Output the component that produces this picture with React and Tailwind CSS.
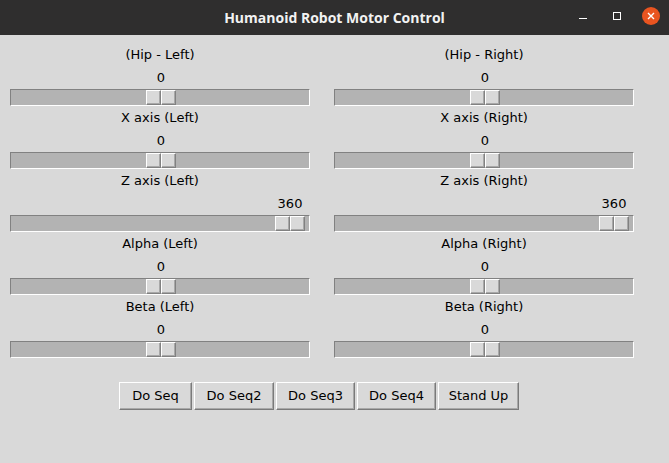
import React from "react";

const rows = [
  { l: "(Hip - Left)", r: "(Hip - Right)", v: "0", pos: 135 },
  { l: "X axis (Left)", r: "X axis (Right)", v: "0", pos: 135 },
  { l: "Z axis (Left)", r: "Z axis (Right)", v: "360", pos: 264 },
  { l: "Alpha (Left)", r: "Alpha (Right)", v: "0", pos: 135 },
  { l: "Beta (Left)", r: "Beta (Right)", v: "0", pos: 135 },
];

function Scale({ label, value, pos }) {
  return (
    <div className="w-[300px] flex flex-col">
      <div className="h-[22px] leading-[22px] text-center pt-[1px]">{label}</div>
      <div className="h-[24px] relative">
        <span
          className="absolute top-[5px] leading-[16px] -translate-x-1/2"
          style={{ left: pos + 16 }}
        >
          {value}
        </span>
      </div>
      <div className="h-[17px] w-[300px] relative bg-[#b3b3b3] border border-t-[#818181] border-l-[#818181] border-b-white border-r-white">
        <div
          className="absolute top-0 h-[15px] w-[30px] flex"
          style={{ left: pos }}
        >
          <div className="w-[15px] h-[15px] bg-[#d9d9d9] border border-t-white border-l-white border-b-[#818181] border-r-[#818181] shadow-[inset_-1px_-1px_0_#a8a8a8]" />
          <div className="w-[15px] h-[15px] bg-[#d9d9d9] border border-t-white border-l-white border-b-[#818181] border-r-[#818181] shadow-[inset_-1px_-1px_0_#a8a8a8]" />
        </div>
      </div>
    </div>
  );
}

function Btn({ children, w }) {
  return (
    <div
      className={`h-[28px] ${w} flex items-center justify-center bg-[#d9d9d9] border border-t-white border-l-white border-b-[#7a7a7a] border-r-[#7a7a7a] shadow-[inset_-1px_-1px_0_#a8a8a8]`}
    >
      {children}
    </div>
  );
}

export default function App() {
  return (
    <div
      className="w-[669px] h-[463px] bg-[#d9d9d9] text-[13px] text-black flex flex-col overflow-hidden"
      style={{ fontFamily: '"DejaVu Sans", sans-serif' }}
    >
      <div className="h-[35px] bg-[#2f2e2e] relative flex items-center justify-center shrink-0">
        <span
          className="text-[14px] font-bold text-[#f2f2f2]"
          style={{ fontFamily: '"Open Sans", "DejaVu Sans", sans-serif' }}
        >
          Humanoid Robot Motor Control
        </span>
        <div className="absolute left-[579px] top-[18px] w-[8px] h-[1px] bg-white" />
        <div className="absolute left-[613px] top-[12px] w-[8px] h-[8px] border border-white" />
        <div className="absolute left-[642px] top-[7px] w-[18px] h-[18px] rounded-full bg-[#e95420] flex items-center justify-center">
          <svg width="8" height="8" viewBox="0 0 8 8">
            <path d="M1 1L7 7M7 1L1 7" stroke="white" strokeWidth="1.4" />
          </svg>
        </div>
      </div>
      <div className="pt-[8px] pl-[10px] flex flex-col">
        {rows.map((r, i) => (
          <div key={i} className="flex gap-[24px] h-[63px]">
            <Scale label={r.l} value={r.v} pos={r.pos} />
            <Scale label={r.r} value={r.v} pos={r.pos} />
          </div>
        ))}
      </div>
      <div className="flex pl-[119px] mt-[24px] gap-[2px]">
        <Btn w="w-[73px]">Do Seq</Btn>
        <Btn w="w-[80px]">Do Seq2</Btn>
        <Btn w="w-[79px]">Do Seq3</Btn>
        <Btn w="w-[79px]">Do Seq4</Btn>
        <Btn w="w-[81px]">Stand Up</Btn>
      </div>
    </div>
  );
}
